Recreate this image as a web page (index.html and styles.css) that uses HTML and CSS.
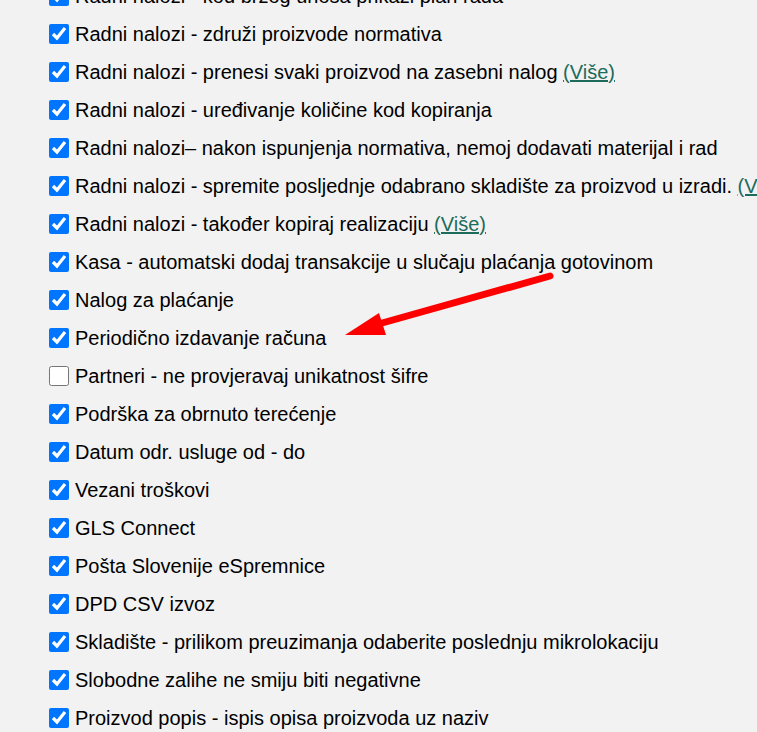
FILE: index.html
```html
<!DOCTYPE html>
<html lang="hr">
<head>
<meta charset="utf-8">
<title>Postavke</title>
<link rel="stylesheet" href="styles.css">
</head>
<body>
<div class="page">
  <ul class="options">
    <li class="option"><input type="checkbox" checked><label>Radni nalozi - kod brzog unosa prikaži plan rada</label></li>
    <li class="option"><input type="checkbox" checked><label>Radni nalozi - združi proizvode normativa</label></li>
    <li class="option"><input type="checkbox" checked><label>Radni nalozi - prenesi svaki proizvod na zasebni nalog <a class="more" href="#">(Više)</a></label></li>
    <li class="option"><input type="checkbox" checked><label>Radni nalozi - uređivanje količine kod kopiranja</label></li>
    <li class="option"><input type="checkbox" checked><label>Radni nalozi– nakon ispunjenja normativa, nemoj dodavati materijal i rad</label></li>
    <li class="option"><input type="checkbox" checked><label>Radni nalozi - spremite posljednje odabrano skladište za proizvod u izradi. <a class="more" href="#">(Više)</a></label></li>
    <li class="option"><input type="checkbox" checked><label>Radni nalozi - također kopiraj realizaciju <a class="more" href="#">(Više)</a></label></li>
    <li class="option"><input type="checkbox" checked><label>Kasa - automatski dodaj transakcije u slučaju plaćanja gotovinom</label></li>
    <li class="option"><input type="checkbox" checked><label>Nalog za plaćanje</label></li>
    <li class="option"><input type="checkbox" checked><label>Periodično izdavanje računa</label></li>
    <li class="option"><input type="checkbox"><label>Partneri - ne provjeravaj unikatnost šifre</label></li>
    <li class="option"><input type="checkbox" checked><label>Podrška za obrnuto terećenje</label></li>
    <li class="option"><input type="checkbox" checked><label>Datum odr. usluge od - do</label></li>
    <li class="option"><input type="checkbox" checked><label>Vezani troškovi</label></li>
    <li class="option"><input type="checkbox" checked><label>GLS Connect</label></li>
    <li class="option"><input type="checkbox" checked><label>Pošta Slovenije eSpremnice</label></li>
    <li class="option"><input type="checkbox" checked><label>DPD CSV izvoz</label></li>
    <li class="option"><input type="checkbox" checked><label>Skladište - prilikom preuzimanja odaberite poslednju mikrolokaciju</label></li>
    <li class="option"><input type="checkbox" checked><label>Slobodne zalihe ne smiju biti negativne</label></li>
    <li class="option"><input type="checkbox" checked><label>Proizvod popis - ispis opisa proizvoda uz naziv</label></li>
  </ul>
  <svg class="arrow" width="757" height="732" viewBox="0 0 757 732" aria-hidden="true">
    <line x1="550" y1="276" x2="375" y2="325" stroke="#ff0000" stroke-width="7" stroke-linecap="round"/>
    <polygon points="345,335 379,313 386,335" fill="#ff0000"/>
  </svg>
</div>
</body>
</html>
```
FILE: styles.css
```css
html, body {
  margin: 0;
  padding: 0;
  background: #f2f2f2;
  overflow: hidden;
}
.page {
  position: relative;
  width: 757px;
  height: 732px;
  overflow: hidden;
}
.options {
  list-style: none;
  margin: -23px 0 0 0;
  padding: 0 0 0 49px;
  font-family: "Liberation Sans", Arial, sans-serif;
  font-size: 20px;
  color: #000;
}
.option {
  display: flex;
  align-items: center;
  height: 38px;
  white-space: nowrap;
}
.option input {
  width: 20px;
  height: 20px;
  margin: 0 6px 0 0;
  accent-color: #0075ff;
  flex: none;
}
.more {
  color: #1d6b5b;
  text-decoration: underline;
}
.arrow {
  position: absolute;
  left: 0;
  top: 0;
  pointer-events: none;
}
```
